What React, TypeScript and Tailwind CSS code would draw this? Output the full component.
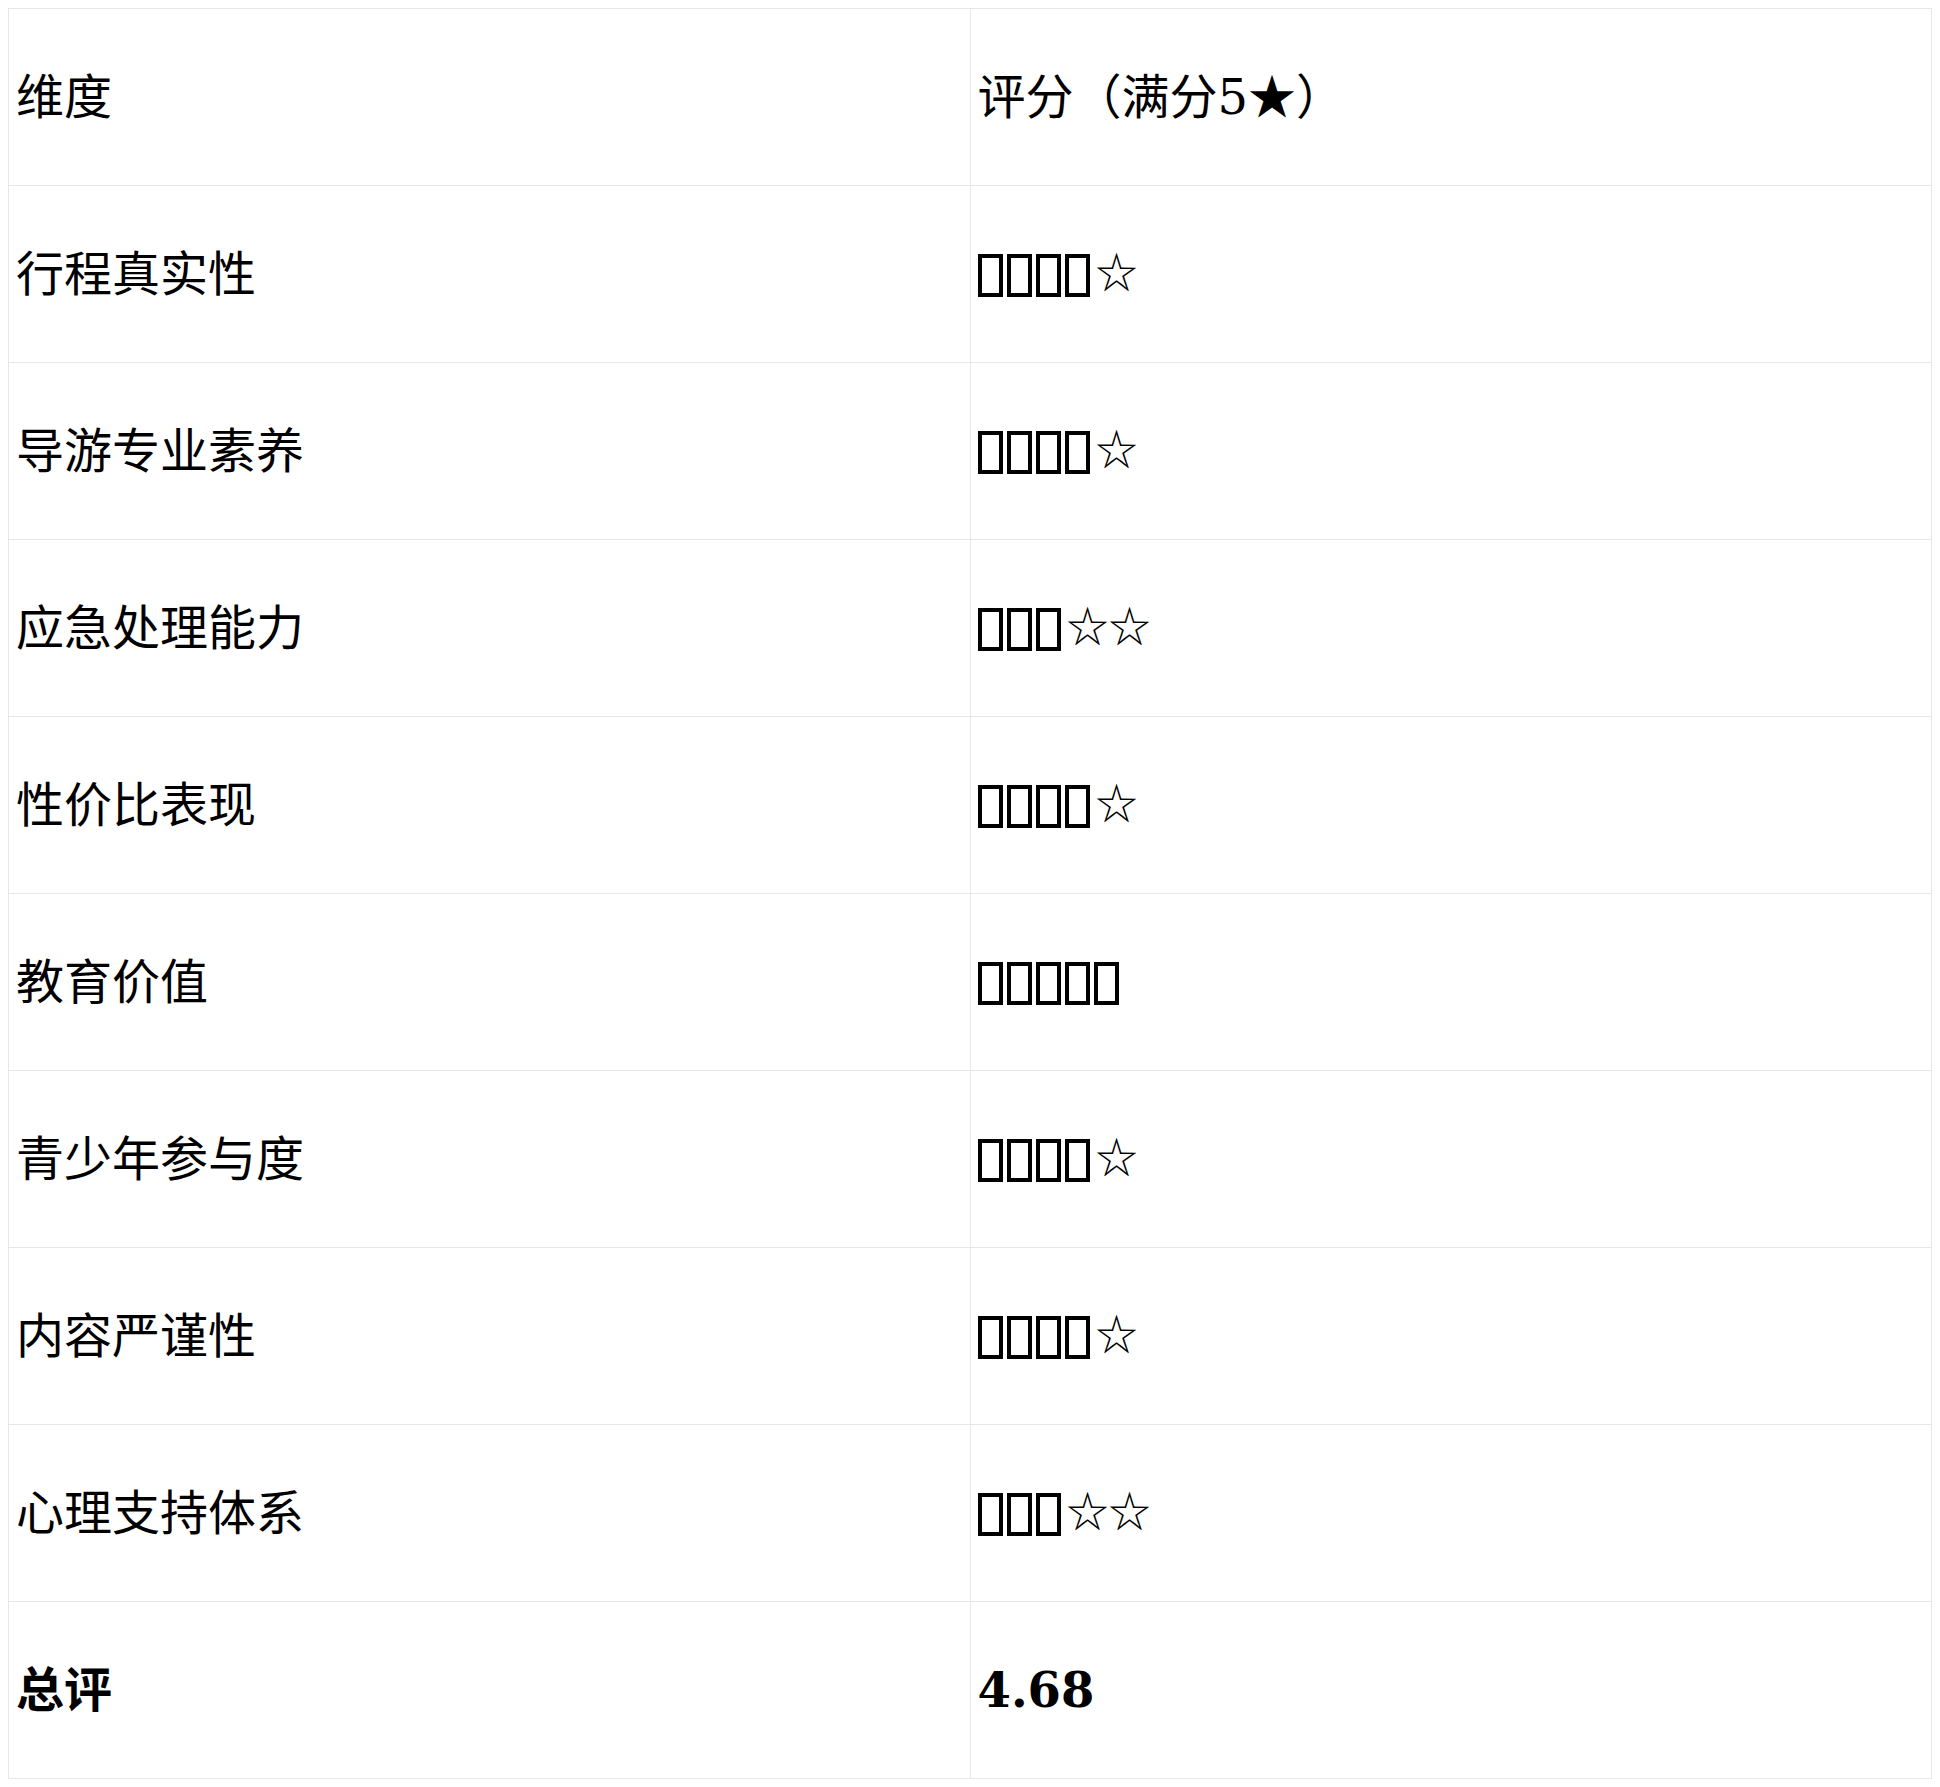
import React from "react";

const rows: [string, number][] = [
  ["行程真实性", 4],
  ["导游专业素养", 4],
  ["应急处理能力", 3],
  ["性价比表现", 4],
  ["教育价值", 5],
  ["青少年参与度", 4],
  ["内容严谨性", 4],
  ["心理支持体系", 3],
];

const font = "[font-family:'DejaVu_Serif','Noto_Sans_CJK_SC',serif]";

function Stars({ n }: { n: number }) {
  return (
    <span className="whitespace-nowrap">
      {Array.from({ length: n }).map((_, i) => (
        <span
          key={i}
          aria-label="⭐"
          className="relative top-[5px] inline-block w-[25px] h-[43px] border-[4px] border-black mr-[4px]"
        />
      ))}
      <span className="relative -top-[4px] text-[42px] ml-[2px]">{"☆".repeat(5 - n)}</span>
    </span>
  );
}

export default function App() {
  return (
    <div className={`bg-white p-2 text-black ${font}`}>
      <table className="w-full border-collapse table-fixed text-[48px] leading-none">
        <tbody>
          <tr className="h-[177px]">
            <td className="border border-[#e5e7eb] px-[7px] align-middle">维度</td>
            <td className="border border-[#e5e7eb] px-[7px] align-middle">评分（满分5★）</td>
          </tr>
          {rows.map(([k, v]) => (
            <tr key={k} className="h-[177px]">
              <td className="border border-[#e5e7eb] px-[7px] align-middle">{k}</td>
              <td className="border border-[#e5e7eb] px-[7px] align-middle">
                <Stars n={v} />
              </td>
            </tr>
          ))}
          <tr className="h-[177px]">
            <td className="border border-[#e5e7eb] px-[7px] align-middle font-bold">总评</td>
            <td className="border border-[#e5e7eb] px-[7px] align-middle font-bold">4.68</td>
          </tr>
        </tbody>
      </table>
    </div>
  );
}
